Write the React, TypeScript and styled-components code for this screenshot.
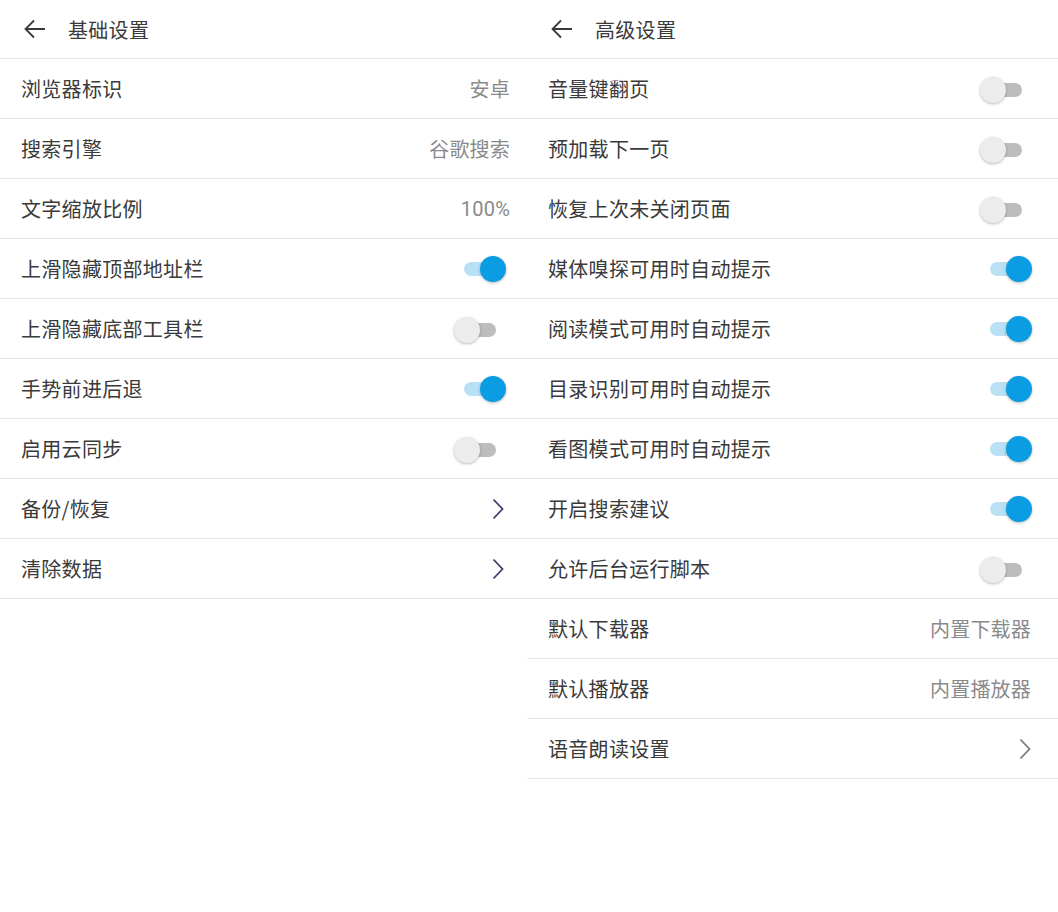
import { createGlobalStyle, styled } from 'styled-components';

const GlobalStyle = createGlobalStyle`
  html, body {
    margin: 0;
    padding: 0;
    background: #fff;
  }
  body {
    font-family: Roboto, 'Noto Sans CJK SC', sans-serif;
    -webkit-font-smoothing: antialiased;
  }
`;

type RowEnd =
  | { kind: 'value'; text: string }
  | { kind: 'switch'; on: boolean }
  | { kind: 'link' };

interface Item {
  label: string;
  end: RowEnd;
}

const BASIC: Item[] = [
  { label: '浏览器标识', end: { kind: 'value', text: '安卓' } },
  { label: '搜索引擎', end: { kind: 'value', text: '谷歌搜索' } },
  { label: '文字缩放比例', end: { kind: 'value', text: '100%' } },
  { label: '上滑隐藏顶部地址栏', end: { kind: 'switch', on: true } },
  { label: '上滑隐藏底部工具栏', end: { kind: 'switch', on: false } },
  { label: '手势前进后退', end: { kind: 'switch', on: true } },
  { label: '启用云同步', end: { kind: 'switch', on: false } },
  { label: '备份/恢复', end: { kind: 'link' } },
  { label: '清除数据', end: { kind: 'link' } },
];

const ADVANCED: Item[] = [
  { label: '音量键翻页', end: { kind: 'switch', on: false } },
  { label: '预加载下一页', end: { kind: 'switch', on: false } },
  { label: '恢复上次未关闭页面', end: { kind: 'switch', on: false } },
  { label: '媒体嗅探可用时自动提示', end: { kind: 'switch', on: true } },
  { label: '阅读模式可用时自动提示', end: { kind: 'switch', on: true } },
  { label: '目录识别可用时自动提示', end: { kind: 'switch', on: true } },
  { label: '看图模式可用时自动提示', end: { kind: 'switch', on: true } },
  { label: '开启搜索建议', end: { kind: 'switch', on: true } },
  { label: '允许后台运行脚本', end: { kind: 'switch', on: false } },
  { label: '默认下载器', end: { kind: 'value', text: '内置下载器' } },
  { label: '默认播放器', end: { kind: 'value', text: '内置播放器' } },
  { label: '语音朗读设置', end: { kind: 'link' } },
];

const Page = styled.div`
  display: grid;
  grid-template-columns: 527px 531px;
  width: 1058px;
  min-height: 912px;
  align-items: start;
`;

const Panel = styled.section<{ $padRight: number; $switchInset: number; $chevronInset: number }>`
  display: flex;
  flex-direction: column;
  --pad-right: ${(p) => p.$padRight}px;
  --switch-inset: ${(p) => p.$switchInset}px;
  --chevron-inset: ${(p) => p.$chevronInset}px;
`;

const Header = styled.header`
  display: flex;
  align-items: center;
  height: 58px;
  padding-left: 22px;
  border-bottom: 1px solid #e6e6e6;
`;

const BackButton = styled.button`
  display: flex;
  align-items: center;
  justify-content: center;
  width: 26px;
  height: 26px;
  padding: 0;
  margin-right: 20px;
  border: none;
  background: none;
  color: #3a3a3a;
`;

const Title = styled.h1`
  margin: 0;
  font-size: 20px;
  font-weight: 400;
  letter-spacing: 0.3px;
  color: #3a3a3a;
  font-family: 'Noto Sans CJK SC', sans-serif;
`;

const Row = styled.div`
  display: flex;
  align-items: center;
  justify-content: space-between;
  height: 59px;
  padding: 0 var(--pad-right) 0 21px;
  border-bottom: 1px solid #e6e6e6;
`;

const Label = styled.span`
  font-size: 20px;
  letter-spacing: 0.3px;
  color: #3a3a3a;
  font-family: 'Noto Sans CJK SC', sans-serif;
`;

const Value = styled.span`
  font-size: 20px;
  letter-spacing: 0.2px;
  color: #8a8a8a;
  font-family: Roboto, 'Noto Sans CJK SC', sans-serif;
`;

const SwitchBox = styled.span<{ $on: boolean }>`
  position: relative;
  display: block;
  width: 52px;
  height: 28px;
  margin-right: var(--switch-inset);
  margin-top: ${(p) => (p.$on ? '0' : '3px')};

  &::before {
    content: '';
    position: absolute;
    left: 10px;
    top: 7px;
    width: 32px;
    height: 14px;
    border-radius: 7px;
    background: ${(p) => (p.$on ? '#b9e1f6' : '#bdbdbd')};
  }

  &::after {
    content: '';
    position: absolute;
    top: 1px;
    left: ${(p) => (p.$on ? '26px' : '0')};
    width: 26px;
    height: 26px;
    border-radius: 50%;
    background: ${(p) => (p.$on ? '#0a9de3' : '#ececec')};
    box-shadow: 0 1px 3px rgba(0, 0, 0, 0.28);
  }
`;

const Chevron = styled.svg<{ $tone: string }>`
  display: block;
  width: 12px;
  height: 22px;
  margin-right: var(--chevron-inset);
  color: ${(p) => p.$tone};
`;

const BackArrow = () => (
  <svg width="24" height="24" viewBox="0 0 24 24" fill="none">
    <path d="M22 12H3M11 3.5L2.5 12L11 20.5" stroke="currentColor" strokeWidth="1.8" />
  </svg>
);

const RowEndView = ({ end, chevronTone }: { end: RowEnd; chevronTone: string }) => {
  if (end.kind === 'value') return <Value>{end.text}</Value>;
  if (end.kind === 'switch') return <SwitchBox $on={end.on} />;
  return (
    <Chevron $tone={chevronTone} viewBox="0 0 12 22" fill="none">
      <path d="M1.5 1.5L10.5 11L1.5 20.5" stroke="currentColor" strokeWidth="1.8" />
    </Chevron>
  );
};

interface PanelProps {
  title: string;
  items: Item[];
  padRight: number;
  switchInset: number;
  chevronInset: number;
  chevronTone: string;
}

const SettingsPanel = ({ title, items, padRight, switchInset, chevronInset, chevronTone }: PanelProps) => (
  <Panel $padRight={padRight} $switchInset={switchInset} $chevronInset={chevronInset}>
    <Header>
      <BackButton aria-label="返回">
        <BackArrow />
      </BackButton>
      <Title>{title}</Title>
    </Header>
    {items.map((item) => (
      <Row key={item.label}>
        <Label>{item.label}</Label>
        <RowEndView end={item.end} chevronTone={chevronTone} />
      </Row>
    ))}
  </Panel>
);

export default function App() {
  return (
    <>
      <GlobalStyle />
      <Page>
        <SettingsPanel
          title="基础设置"
          items={BASIC}
          padRight={17}
          switchInset={4}
          chevronInset={6}
          chevronTone="#403d6e"
        />
        <SettingsPanel
          title="高级设置"
          items={ADVANCED}
          padRight={27}
          switchInset={-1}
          chevronInset={0}
          chevronTone="#7a7a7a"
        />
      </Page>
    </>
  );
}
